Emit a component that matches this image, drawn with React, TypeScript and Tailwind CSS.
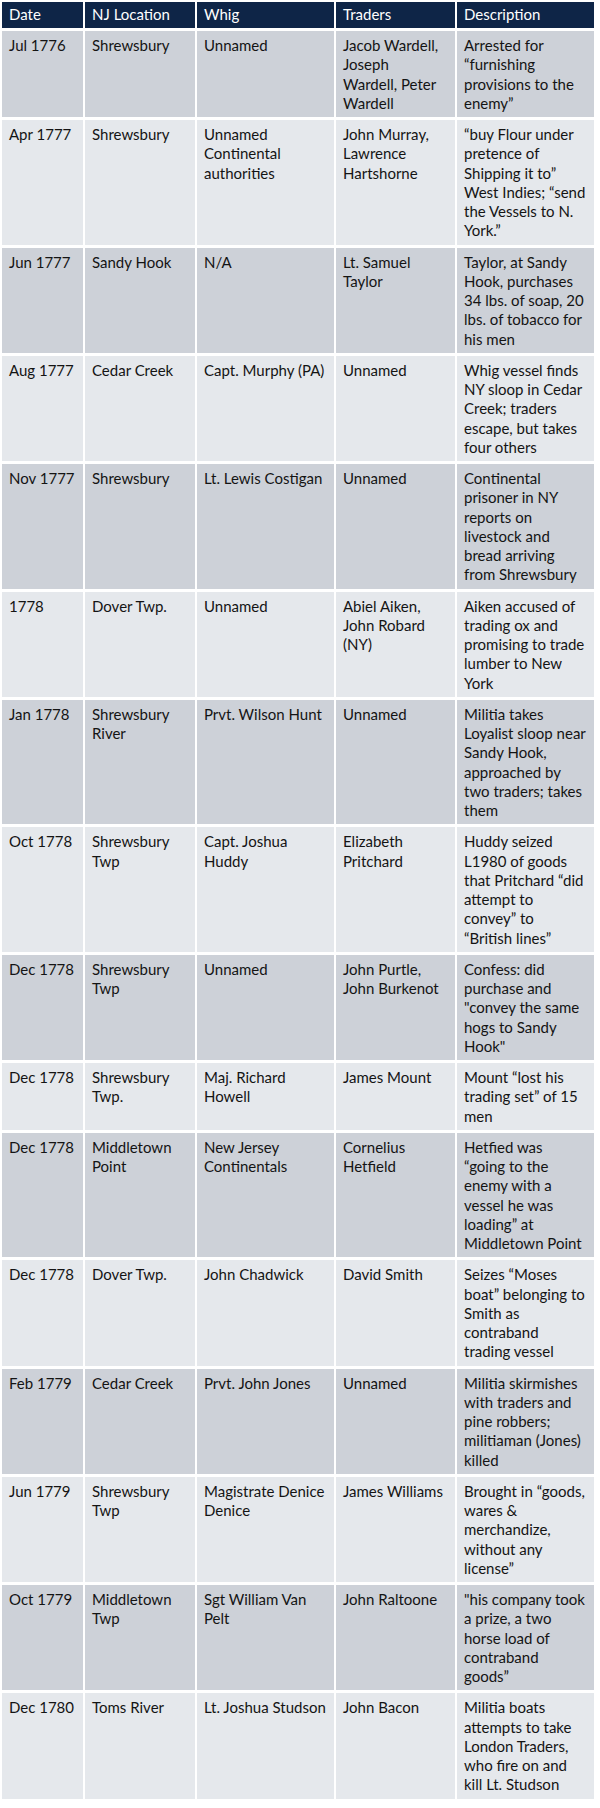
import React from "react";

type Row = string[][];

const rows: Row[] = [
  [["Jul 1776"], ["Shrewsbury"], ["Unnamed"], ["Jacob Wardell,", "Joseph", "Wardell, Peter", "Wardell"], ["Arrested for", "“furnishing", "provisions to the", "enemy”"]],
  [["Apr 1777"], ["Shrewsbury"], ["Unnamed", "Continental", "authorities"], ["John Murray,", "Lawrence", "Hartshorne"], ["“buy Flour under", "pretence of", "Shipping it to”", "West Indies; “send", "the Vessels to N.", "York.”"]],
  [["Jun 1777"], ["Sandy Hook"], ["N/A"], ["Lt. Samuel", "Taylor"], ["Taylor, at Sandy", "Hook, purchases", "34 lbs. of soap, 20", "lbs. of tobacco for", "his men"]],
  [["Aug 1777"], ["Cedar Creek"], ["Capt. Murphy (PA)"], ["Unnamed"], ["Whig vessel finds", "NY sloop in Cedar", "Creek; traders", "escape, but takes", "four others"]],
  [["Nov 1777"], ["Shrewsbury"], ["Lt. Lewis Costigan"], ["Unnamed"], ["Continental", "prisoner in NY", "reports on", "livestock and", "bread arriving", "from Shrewsbury"]],
  [["1778"], ["Dover Twp."], ["Unnamed"], ["Abiel Aiken,", "John Robard", "(NY)"], ["Aiken accused of", "trading ox and", "promising to trade", "lumber to New", "York"]],
  [["Jan 1778"], ["Shrewsbury", "River"], ["Prvt. Wilson Hunt"], ["Unnamed"], ["Militia takes", "Loyalist sloop near", "Sandy Hook,", "approached by", "two traders; takes", "them"]],
  [["Oct 1778"], ["Shrewsbury", "Twp"], ["Capt. Joshua", "Huddy"], ["Elizabeth", "Pritchard"], ["Huddy seized", "L1980 of goods", "that Pritchard “did", "attempt to", "convey” to", "“British lines”"]],
  [["Dec 1778"], ["Shrewsbury", "Twp"], ["Unnamed"], ["John Purtle,", "John Burkenot"], ["Confess: did", "purchase and", "\"convey the same", "hogs to Sandy", "Hook\""]],
  [["Dec 1778"], ["Shrewsbury", "Twp."], ["Maj. Richard", "Howell"], ["James Mount"], ["Mount “lost his", "trading set” of 15", "men"]],
  [["Dec 1778"], ["Middletown", "Point"], ["New Jersey", "Continentals"], ["Cornelius", "Hetfield"], ["Hetfied was", "“going to the", "enemy with a", "vessel he was", "loading” at", "Middletown Point"]],
  [["Dec 1778"], ["Dover Twp."], ["John Chadwick"], ["David Smith"], ["Seizes “Moses", "boat” belonging to", "Smith as", "contraband", "trading vessel"]],
  [["Feb 1779"], ["Cedar Creek"], ["Prvt. John Jones"], ["Unnamed"], ["Militia skirmishes", "with traders and", "pine robbers;", "militiaman (Jones)", "killed"]],
  [["Jun 1779"], ["Shrewsbury", "Twp"], ["Magistrate Denice", "Denice"], ["James Williams"], ["Brought in “goods,", "wares &", "merchandize,", "without any", "license”"]],
  [["Oct 1779"], ["Middletown", "Twp"], ["Sgt William Van", "Pelt"], ["John Raltoone"], ["\"his company took", "a prize, a two", "horse load of", "contraband", "goods”"]],
  [["Dec 1780"], ["Toms River"], ["Lt. Joshua Studson"], ["John Bacon"], ["Militia boats", "attempts to take", "London Traders,", "who fire on and", "kill Lt. Studson"]],
];

const headers = ["Date", "NJ Location", "Whig", "Traders", "Description"];

export default function App() {
  return (
    <div
      className="w-[600px] min-h-[1808px] bg-white pt-[2px] pl-[2px]"
      style={{ fontFamily: "Lato, 'Open Sans', sans-serif" }}
    >
      <div className="grid w-[592px] grid-cols-[81px_110px_137px_119px_137px] gap-x-[2px] gap-y-[3px] text-[15px] leading-[19.25px] text-[#141414]">
        {headers.map((h) => (
          <div
            key={h}
            className="flex h-[26px] items-center bg-[#0e2547] px-[7px] text-white"
          >
            {h}
          </div>
        ))}
        {rows.map((row, ri) =>
          row.map((cell, ci) => (
            <div
              key={`${ri}-${ci}`}
              className={
                ri % 2 === 0
                  ? "bg-[#cdd1d8] pl-[7px] pr-[3px] pt-[5px] pb-[4px]"
                  : "bg-[#e5e8ec] pl-[7px] pr-[3px] pt-[5px] pb-[4px]"
              }
            >
              {cell.map((line, li) => (
                <div key={li} className="whitespace-nowrap">
                  {line}
                </div>
              ))}
            </div>
          ))
        )}
      </div>
    </div>
  );
}
